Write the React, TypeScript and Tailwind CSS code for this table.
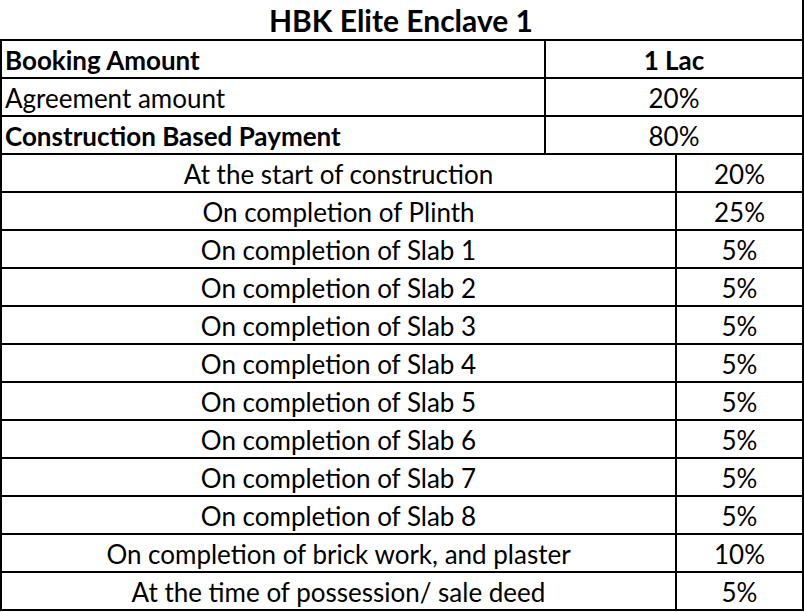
import React from "react";

const top = [
  { label: "Booking Amount", value: "1 Lac", bold: true, vbold: true },
  { label: "Agreement amount", value: "20%", bold: false, vbold: false },
  { label: "Construction Based Payment", value: "80%", bold: true, vbold: false },
];

const stages = [
  ["At the start of construction", "20%"],
  ["On completion of Plinth", "25%"],
  ["On completion of Slab 1", "5%"],
  ["On completion of Slab 2", "5%"],
  ["On completion of Slab 3", "5%"],
  ["On completion of Slab 4", "5%"],
  ["On completion of Slab 5", "5%"],
  ["On completion of Slab 6", "5%"],
  ["On completion of Slab 7", "5%"],
  ["On completion of Slab 8", "5%"],
  ["On completion of brick work, and plaster", "10%"],
  ["At the time of possession/ sale deed", "5%"],
];

export default function App() {
  return (
    <div
      className="w-[804px] h-[612px] bg-white text-black overflow-hidden"
      style={{ fontFamily: "Lato, 'Noto Sans', sans-serif" }}
    >
      <div className="h-[41px] border-b-2 border-r-2 border-black flex items-center justify-center">
        <span className="text-[30px] font-bold leading-none pt-[1px]">HBK Elite Enclave 1</span>
      </div>
      {top.map((r) => (
        <div key={r.label} className="h-[38px] flex border-b-2 border-l-2 border-r-2 border-black">
          <div className={`w-[544px] border-r-2 border-black flex items-center pl-[3px] text-[26px] leading-none pt-[1px] ${r.bold ? "font-bold" : ""}`}>
            {r.label}
          </div>
          <div className={`flex-1 flex items-center justify-center text-[26px] leading-none pt-[1px] ${r.vbold ? "font-bold" : ""}`}>
            {r.value}
          </div>
        </div>
      ))}
      {stages.map(([l, v]) => (
        <div key={l} className="h-[38px] flex border-b-2 border-l-2 border-r-2 border-black">
          <div className="w-[675px] border-r-2 border-black flex items-center justify-center text-[26px] leading-none pt-[1px]">
            {l}
          </div>
          <div className="flex-1 flex items-center justify-center text-[26px] leading-none pt-[1px]">
            {v}
          </div>
        </div>
      ))}
    </div>
  );
}
